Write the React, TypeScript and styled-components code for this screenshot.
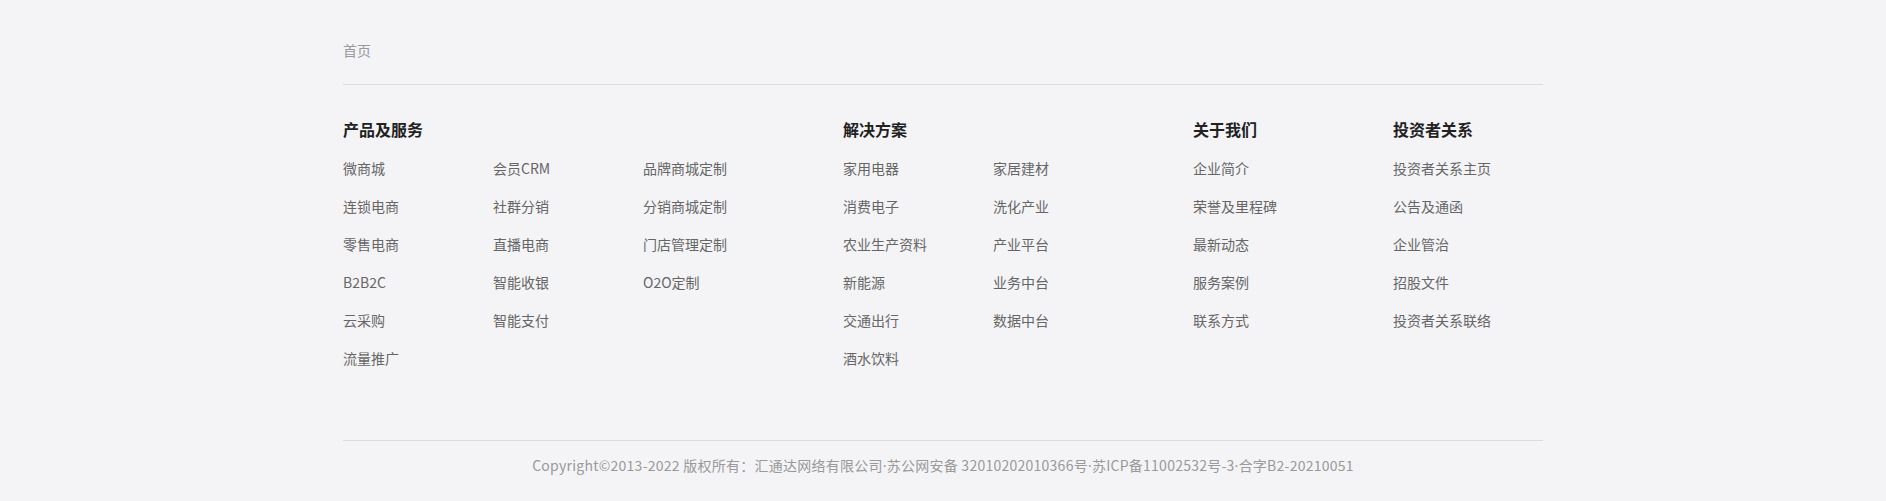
import React from "react";
import styled, { createGlobalStyle } from "styled-components";

const Global = createGlobalStyle`
  html, body {
    margin: 0;
    padding: 0;
    background: #f4f4f6;
  }
  body {
    font-family: "Noto Sans CJK SC", "Noto Sans", sans-serif;
  }
`;

const Footer = styled.footer`
  background: #f4f4f6;
  min-height: 501px;
`;

const Inner = styled.div`
  width: 1200px;
  margin: 0 auto;
`;

const Breadcrumb = styled.div`
  padding-top: 40px;
  padding-bottom: 24px;
  border-bottom: 1px solid #dcdcdf;
  font-size: 14px;
  line-height: 20px;
  color: #999;
`;

const Nav = styled.div`
  display: flex;
  padding-top: 32px;
  padding-bottom: 71px;
  border-bottom: 1px solid #dcdcdf;
`;

const Section = styled.div<{ $width: number }>`
  width: ${(p) => p.$width}px;
  flex: none;
`;

const Heading = styled.h3`
  margin: 0 0 16px;
  font-size: 16px;
  line-height: 24px;
  font-weight: 700;
  color: #222;
`;

const Columns = styled.div`
  display: flex;
`;

const List = styled.ul`
  list-style: none;
  margin: 0;
  padding: 0;
  width: 150px;
  display: flex;
  flex-direction: column;
  gap: 16px;
`;

const Item = styled.li`
  font-size: 14px;
  line-height: 22px;
  color: #666;
  white-space: nowrap;
`;

const Copyright = styled.div`
  padding: 14px 0 24px;
  text-align: center;
  font-size: 14px;
  line-height: 20px;
  letter-spacing: 0.25px;
  color: #999;
`;

const Sep = styled.span`
  font-family: "Noto Sans", sans-serif;
`;

const sections: { title: string; width: number; cols: string[][] }[] = [
  {
    title: "产品及服务",
    width: 500,
    cols: [
      ["微商城", "连锁电商", "零售电商", "B2B2C", "云采购", "流量推广"],
      ["会员CRM", "社群分销", "直播电商", "智能收银", "智能支付"],
      ["品牌商城定制", "分销商城定制", "门店管理定制", "O2O定制"],
    ],
  },
  {
    title: "解决方案",
    width: 350,
    cols: [
      ["家用电器", "消费电子", "农业生产资料", "新能源", "交通出行", "酒水饮料"],
      ["家居建材", "洗化产业", "产业平台", "业务中台", "数据中台"],
    ],
  },
  {
    title: "关于我们",
    width: 200,
    cols: [["企业简介", "荣誉及里程碑", "最新动态", "服务案例", "联系方式"]],
  },
  {
    title: "投资者关系",
    width: 150,
    cols: [["投资者关系主页", "公告及通函", "企业管治", "招股文件", "投资者关系联络"]],
  },
];

export default function App() {
  return (
    <Footer>
      <Global />
      <Inner>
        <Breadcrumb>首页</Breadcrumb>
        <Nav>
          {sections.map((s) => (
            <Section key={s.title} $width={s.width}>
              <Heading>{s.title}</Heading>
              <Columns>
                {s.cols.map((c, i) => (
                  <List key={i}>
                    {c.map((t) => (
                      <Item key={t}>{t}</Item>
                    ))}
                  </List>
                ))}
              </Columns>
            </Section>
          ))}
        </Nav>
        <Copyright>
          Copyright©2013-2022 版权所有：汇通达网络有限公司<Sep>·</Sep>苏公网安备 32010202010366号<Sep>·</Sep>苏ICP备11002532号-3<Sep>·</Sep>合字B2-20210051
        </Copyright>
      </Inner>
    </Footer>
  );
}
